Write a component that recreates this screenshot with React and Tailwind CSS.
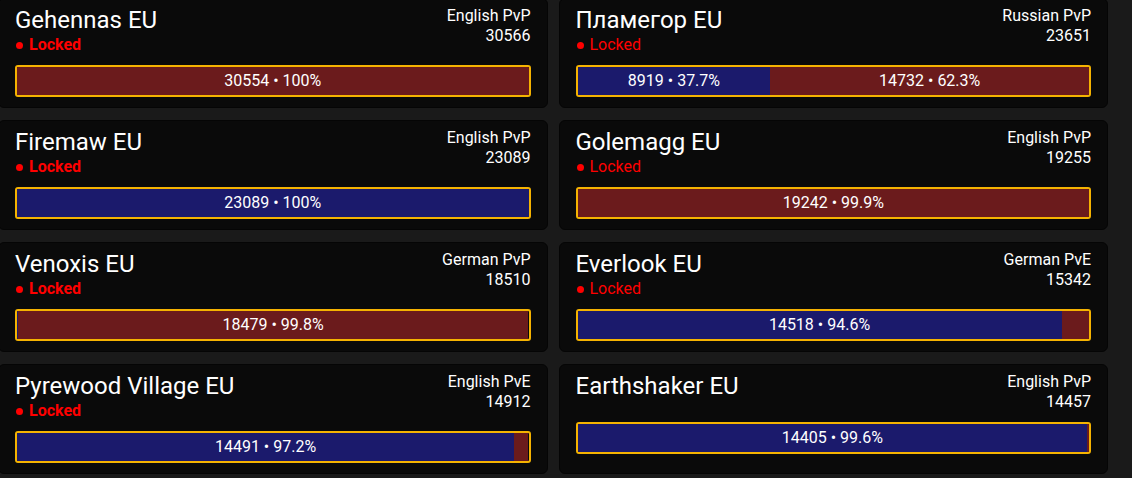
const realms = [
  { name: "Gehennas EU", type: "English PvP", total: 30566, locked: true, a: 0, h: 30554, bold: true },
  { name: "Пламегор EU", type: "Russian PvP", total: 23651, locked: true, a: 8919, h: 14732 },
  { name: "Firemaw EU", type: "English PvP", total: 23089, locked: true, a: 23089, h: 0, bold: true },
  { name: "Golemagg EU", type: "English PvP", total: 19255, locked: true, a: 13, h: 19242 },
  { name: "Venoxis EU", type: "German PvP", total: 18510, locked: true, a: 31, h: 18479, bold: true },
  { name: "Everlook EU", type: "German PvE", total: 15342, locked: true, a: 14518, h: 824 },
  { name: "Pyrewood Village EU", type: "English PvE", total: 14912, locked: true, a: 14491, h: 421, bold: true },
  { name: "Earthshaker EU", type: "English PvP", total: 14457, locked: false, a: 14405, h: 52 },
];

function pct(n, sum) {
  const p = (n / sum) * 100;
  return p >= 99.95 ? "100" : p.toFixed(1);
}

function Bar({ a, h }) {
  const sum = a + h;
  const segs = [
    { n: a, cls: "bg-[#1b1a6c]" },
    { n: h, cls: "bg-[#6b1b1c]" },
  ];
  return (
    <div className="flex h-8 overflow-hidden rounded-[3px] border-2 border-[#f5b301]">
      {segs.map((s, i) =>
        s.n > 0 ? (
          <div
            key={i}
            className={`flex items-center justify-center overflow-hidden whitespace-nowrap text-[16px] text-white ${s.cls}`}
            style={{ width: `${(s.n / sum) * 100}%` }}
          >
            {s.n / sum > 0.1 && `${s.n} • ${pct(s.n, sum)}%`}
          </div>
        ) : null
      )}
    </div>
  );
}

function RealmCard({ r }) {
  return (
    <div className="h-[110px] rounded-md border border-[#050505] bg-[#0a0a0a] px-[16px] pt-[7px]">
      <div className="flex items-start justify-between">
        <div>
          <div className="text-[24px] leading-[29px] text-white">{r.name}</div>
          {r.locked && (
            <div className={`flex items-center gap-[6px] pl-[1px] text-[16px] leading-[20px] text-[#ff0000] ${r.bold ? "font-bold" : ""}`}>
              <span className="h-[7px] w-[7px] rounded-full bg-[#ff0000]" />
              Locked
            </div>
          )}
        </div>
        <div className="text-right text-[16px] leading-[20px] text-white">
          <div>{r.type}</div>
          <div>{r.total}</div>
        </div>
      </div>
      <div className="mt-[10px]">
        <Bar a={r.a} h={r.h} />
      </div>
    </div>
  );
}

export default function App() {
  return (
    <div className="h-screen overflow-hidden bg-[#1a1a1a] font-['Roboto',sans-serif]">
      <div className="-ml-[2px] -mt-[2px] grid w-[1110px] grid-cols-2 gap-x-[11px] gap-y-3">
        {realms.map(r => (
          <RealmCard key={r.name} r={r} />
        ))}
      </div>
    </div>
  );
}
